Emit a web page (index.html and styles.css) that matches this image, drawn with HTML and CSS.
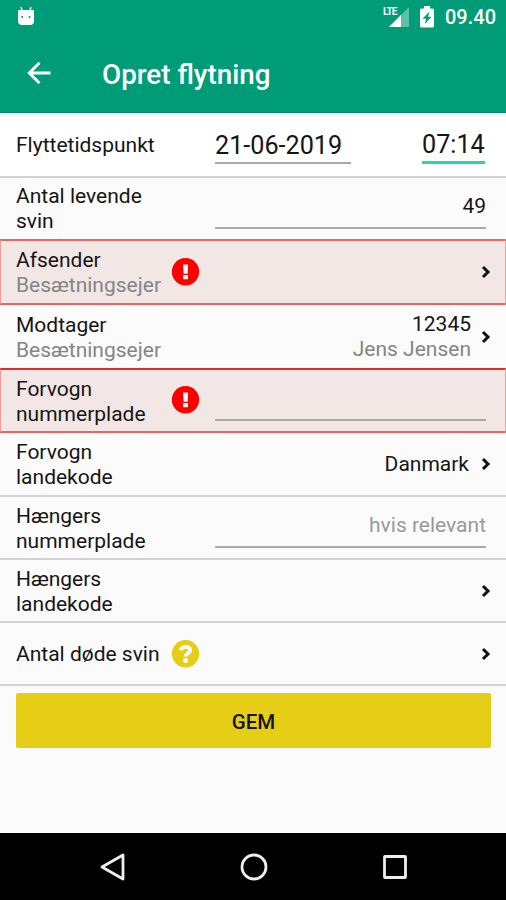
FILE: index.html
```html
<!doctype html>
<html lang="da">
<head>
  <meta charset="utf-8">
  <meta name="viewport" content="width=device-width, initial-scale=1.0">
  <title>Opret flytning</title>
  <link rel="stylesheet" href="styles.css">
</head>
<body>
<svg class="defs" width="0" height="0">
  <symbol id="chevron" viewBox="0 0 10 14">
    <path d="M2 2l5 5-5 5" fill="none" stroke="#111" stroke-width="3"/>
  </symbol>
  <symbol id="alert" viewBox="0 0 28 28">
    <circle cx="13.500" cy="13.700" r="13.700" fill="#f00"/>
    <path d="M11.100 6.500h5l-.5 9.300h-4zM11.200 17h4.800v4.200h-4.800z" fill="#fff"/>
  </symbol>
  <symbol id="help" viewBox="0 0 28 28">
    <circle cx="13.500" cy="13.700" r="13.700" fill="#e6cd16"/>
    <path d="M8.600 10.200c1.100-2.300 2.700-3.300 4.900-3.300 2.700 0 4.600 1.300 4.600 3.500 0 3.100-4.500 2.700-4.500 6" fill="none" stroke="#fff" stroke-width="3.800"/>
    <circle cx="13.600" cy="20.500" r="2.500" fill="#fff"/>
  </symbol>
</svg>

<header class="appbar">
  <div class="status">
    <svg class="robot" width="18" height="22" viewBox="0 0 18 22">
      <path d="M4 1l1.500 5M14 1l-1.500 5" stroke="#d5eee6" stroke-width="1.600"/>
      <path d="M1 5q0-1 1-1h14q1 0 1 1v10q0 4-4 4H5q-4 0-4-4z" fill="#fff"/>
      <circle cx="5.200" cy="11" r="1" fill="#009c78"/>
      <circle cx="12.600" cy="11" r="1" fill="#009c78"/>
    </svg>
    <div class="signal">
      <span class="lte">LTE</span>
      <svg width="20" height="20" viewBox="0 0 20 20">
        <path d="M20 0v20H0z" fill="#5fc0a8"/>
        <path d="M12 8v12H0z" fill="#fff"/>
      </svg>
    </div>
    <svg class="battery" width="14" height="22" viewBox="0 0 14 22">
      <path d="M4 0h6v2.500h2.500q1.500 0 1.500 1.500v16q0 1.500-1.500 1.500h-11Q0 21.500 0 20V4q0-1.500 1.500-1.500H4z" fill="#fff"/>
      <path d="M9.500 5.500L8 10.700h3.500L4.800 18l1.300-5.200H2.500z" fill="#009c78"/>
    </svg>
    <span class="clock">09.40</span>
  </div>
  <div class="toolbar">
    <svg class="back" width="24" height="24" viewBox="0 0 24 24">
      <path d="M23.500 12H2.500M12.500 1.800L2.300 12l10.200 10.200" fill="none" stroke="#fff" stroke-width="2.900"/>
    </svg>
    <h1>Opret flytning</h1>
  </div>
</header>

<main>
  <div class="row time">
    <div class="label">Flyttetidspunkt</div>
    <div class="date">21-06-2019</div>
    <div class="hour">07:14</div>
  </div>
  <div class="row amount">
    <div class="label">Antal levende<br>svin</div>
    <div class="field">49</div>
  </div>
  <div class="row sender error">
    <div class="label">Afsender<br><small>Besætningsejer</small></div>
    <svg class="mark"><use href="#alert"/></svg>
    <svg class="chevron"><use href="#chevron"/></svg>
  </div>
  <div class="row receiver">
    <div class="label">Modtager<br><small>Besætningsejer</small></div>
    <div class="value">12345<br><small>Jens Jensen</small></div>
    <svg class="chevron"><use href="#chevron"/></svg>
  </div>
  <div class="row plate error">
    <div class="label">Forvogn<br>nummerplade</div>
    <svg class="mark"><use href="#alert"/></svg>
    <div class="field"></div>
  </div>
  <div class="row country">
    <div class="label">Forvogn<br>landekode</div>
    <div class="value picked">Danmark</div>
    <svg class="chevron"><use href="#chevron"/></svg>
  </div>
  <div class="row trailer">
    <div class="label">Hængers<br>nummerplade</div>
    <div class="field hint">hvis relevant</div>
  </div>
  <div class="row">
    <div class="label">Hængers<br>landekode</div>
    <svg class="chevron"><use href="#chevron"/></svg>
  </div>
  <div class="row dead">
    <div class="label">Antal døde svin</div>
    <svg class="mark"><use href="#help"/></svg>
    <svg class="chevron"><use href="#chevron"/></svg>
  </div>
  <button class="save">GEM</button>
</main>

<nav class="navbar">
  <svg width="28" height="28" viewBox="0 0 28 28">
    <path d="M24 2v24L3 14z"/>
  </svg>
  <svg width="28" height="28" viewBox="0 0 28 28">
    <circle cx="14" cy="14" r="12"/>
  </svg>
  <svg width="28" height="28" viewBox="0 0 28 28">
    <rect x="3.500" y="3.500" width="21" height="21" rx=".5"/>
  </svg>
</nav>
</body>
</html>
```

FILE: styles.css
```css
* {
  box-sizing: border-box;
}
body {
  margin: 0;
  height: 900px;
  display: flex;
  flex-direction: column;
  overflow: hidden;
  background: #fbfbfb;
  color: #151515;
  font: 21px/24.6px Roboto, sans-serif;
}
svg {
  display: block;
  flex: none;
}
.defs {
  position: absolute;
}

/* top bar */
.appbar {
  height: 113px;
  flex: none;
  background: #009c78;
  border-bottom: 1px solid #008a68;
  color: #fff;
}
.status {
  display: flex;
  height: 35px;
  padding: 6px 10px 0 17px;
  align-items: flex-start;
}
.signal {
  display: flex;
  margin-left: auto;
  padding-top: 1px;
}
.lte {
  width: 14px;
  margin-right: -8px;
  font: bold 10px/10px Roboto, sans-serif;
  letter-spacing: -.8px;
}
.battery {
  margin: 0 11px 0 11px;
}
.clock {
  font-size: 20px;
  line-height: 23px;
  font-weight: 500;
}
.toolbar {
  display: flex;
  align-items: center;
  height: 76px;
  padding-left: 27px;
}
.toolbar h1 {
  margin: 3px 0 0 51px;
  font-size: 27.8px;
  line-height: 32px;
  font-weight: 500;
}

/* form rows */
.row {
  display: flex;
  align-items: center;
  height: 63px;
  padding: 0 15px 0 16px;
  border-bottom: 2px solid #d3d3d3;
}
.label {
  width: 156px;
  flex: none;
  padding-top: 2px;
  white-space: nowrap;
}
small {
  font-size: inherit;
  color: #858585;
}
.time {
  height: 65px;
  background: #fff;
}
.date,
.hour {
  height: 38px;
  padding-top: 7px;
  border-bottom: 2px solid #aaa;
  font-size: 25.2px;
  line-height: 26px;
}
.date {
  width: 136px;
  margin-left: 43px;
}
.hour {
  width: 63px;
  height: 39px;
  margin-left: auto;
  margin-right: 6px;
  border-color: #2ed3a5;
  border-width: 3px;
}
.amount {
  height: 61px;
  border-bottom: none;
}
.amount .label {
  padding-top: 0;
}
.error {
  border: 2px solid #ed6262;
  border-left: 1px solid #f39a9a;
  border-right: 1px solid #f39a9a;
  background: #f3e7e6;
  padding-left: 15px;
  padding-right: 14px;
}
.sender {
  height: 66px;
}
.receiver {
  border-bottom: none;
}
.plate {
  height: 65px;
  border-top-color: #e02c2c;
}
.plate .mark {
  margin-top: -2px;
}
.country {
  height: 64px;
}
.mark {
  width: 28px;
  height: 28px;
}
.chevron {
  width: 10px;
  height: 14px;
  margin-left: auto;
}
.value {
  margin-left: auto;
  text-align: right;
}
.value + .chevron {
  margin-left: 10px;
}
.picked {
  margin-right: 2px;
}
.field {
  width: 271px;
  height: 40px;
  margin-left: auto;
  margin-right: 5px;
  padding-top: 5px;
  border-bottom: 2px solid #aaa;
  text-align: right;
}
.hint {
  color: #999;
}
.save {
  display: block;
  width: 475px;
  height: 55px;
  margin: 7px 0 0 16px;
  padding: 2px 0 0;
  border: 0;
  border-radius: 2px;
  background: #e6cd16;
  color: #151515;
  font: 500 20.5px/24px Roboto, sans-serif;
}

/* system navigation */
.navbar {
  display: flex;
  justify-content: center;
  align-items: center;
  gap: 113px;
  height: 67px;
  margin-top: auto;
  padding-left: 1px;
  flex: none;
  background: #000;
}
.navbar svg {
  fill: none;
  stroke: #eee;
  stroke-width: 2.8;
  stroke-linejoin: round;
}
```
